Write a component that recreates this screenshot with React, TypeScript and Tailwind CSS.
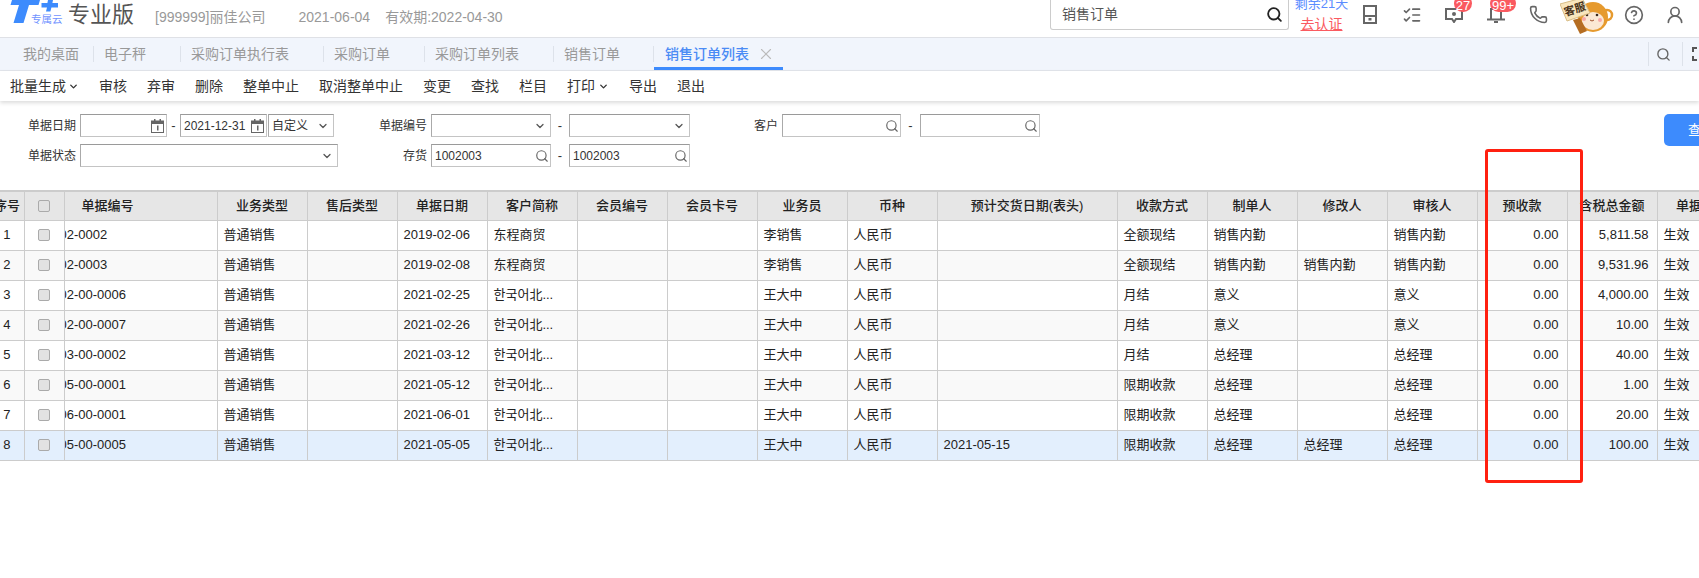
import type { ReactNode } from 'react';
import { ChevronDown, CircleHelp, ListChecks, Phone, Search, UserRound, X } from 'lucide-react';

type Row = {
  no: number;
  code: string;
  date: string;
  customer: string;
  clerk: string;
  delivery: string;
  payment: string;
  maker: string;
  editor: string;
  auditor: string;
  total: string;
};

const rows: Row[] = [
  { no: 1, code: '02-0002', date: '2019-02-06', customer: '东程商贸', clerk: '李销售', delivery: '', payment: '全额现结', maker: '销售内勤', editor: '', auditor: '销售内勤', total: '5,811.58' },
  { no: 2, code: '02-0003', date: '2019-02-08', customer: '东程商贸', clerk: '李销售', delivery: '', payment: '全额现结', maker: '销售内勤', editor: '销售内勤', auditor: '销售内勤', total: '9,531.96' },
  { no: 3, code: '02-00-0006', date: '2021-02-25', customer: '한국어北...', clerk: '王大中', delivery: '', payment: '月结', maker: '意义', editor: '', auditor: '意义', total: '4,000.00' },
  { no: 4, code: '02-00-0007', date: '2021-02-26', customer: '한국어北...', clerk: '王大中', delivery: '', payment: '月结', maker: '意义', editor: '', auditor: '意义', total: '10.00' },
  { no: 5, code: '03-00-0002', date: '2021-03-12', customer: '한국어北...', clerk: '王大中', delivery: '', payment: '月结', maker: '总经理', editor: '', auditor: '总经理', total: '40.00' },
  { no: 6, code: '05-00-0001', date: '2021-05-12', customer: '한국어北...', clerk: '王大中', delivery: '', payment: '限期收款', maker: '总经理', editor: '', auditor: '总经理', total: '1.00' },
  { no: 7, code: '06-00-0001', date: '2021-06-01', customer: '한국어北...', clerk: '王大中', delivery: '', payment: '限期收款', maker: '总经理', editor: '', auditor: '总经理', total: '20.00' },
  { no: 8, code: '05-00-0005', date: '2021-05-05', customer: '한국어北...', clerk: '王大中', delivery: '2021-05-15', payment: '限期收款', maker: '总经理', editor: '总经理', auditor: '总经理', total: '100.00' },
];

const toolbar = ['审核', '弃审', '删除', '整单中止', '取消整单中止', '变更', '查找', '栏目'];

function Logo() {
  return (
    <div className="relative ml-[10px] h-[37px] w-[54px] shrink-0 self-start">
      <svg width="54" height="24" viewBox="0 0 54 24" className="absolute left-0 top-0">
        <path d="M2 0H30L28.5 5H19L13.5 23H3.5L9 5H0.5Z" fill="#3d8bfd" />
        <path d="M38 0H43L42.4 3H48V7.5H41.4L40.4 11.5H36L37 7.5H31.5V3H37.4Z" fill="#3d8bfd" />
      </svg>
      <span className="absolute left-[21px] top-[15px] text-[10.5px] leading-[9px] whitespace-nowrap text-[#6f93ff]">专属云</span>
    </div>
  );
}

function Badge({ children, className }: { children: ReactNode; className: string }) {
  return (
    <span className={`absolute -top-[5px] flex h-[17px] items-center justify-center rounded-full bg-[#fa5a60] pt-[3px] text-[13px] leading-none text-white ${className}`}>
      {children}
    </span>
  );
}

function Monkey() {
  return (
    <svg width="54" height="37" viewBox="0 0 54 37" className="shrink-0">
      <circle cx="47" cy="15" r="5" fill="none" stroke="#e69a2e" strokeWidth="2.5" />
      <circle cx="33" cy="17" r="15" fill="#e69a2e" />
      <ellipse cx="33" cy="21" rx="11" ry="9" fill="#fbe8d4" />
      <circle cx="27" cy="15" r="1.3" fill="#3a2a20" />
      <circle cx="37" cy="15" r="1.3" fill="#3a2a20" />
      <circle cx="24" cy="19" r="2" fill="#f7a8a8" />
      <circle cx="40" cy="20" r="2" fill="#f7a8a8" />
      <path d="M30 20q2 2 4 0" fill="none" stroke="#a0522d" strokeWidth="1" />
      <path d="M13 20L20 18L27 31L20 34Z" fill="#b56d22" />
      <path d="M0 4L22 -2L30 13L7 21Z" fill="#f9e6bd" stroke="#d8bd87" />
      <text x="15" y="13" textAnchor="middle" fontSize="11" fontWeight="700" fill="#4a3520" transform="rotate(-18 15 10)">客服</text>
    </svg>
  );
}

function Header() {
  return (
    <header className="flex h-[38px] items-center border-b border-[#dfe1e6] bg-white pr-[3px]">
      <Logo />
      <span className="ml-[4px] mb-[8px] text-[22px] leading-none text-[#555] whitespace-nowrap">专业版</span>
      <span className="ml-[21px] mb-[2px] text-[14px] text-[#999] whitespace-nowrap">[999999]丽佳公司</span>
      <span className="ml-[33px] mb-[2px] text-[14px] text-[#999] whitespace-nowrap">2021-06-04</span>
      <span className="ml-[15px] mb-[2px] text-[14px] text-[#999] whitespace-nowrap">有效期:2022-04-30</span>
      <div className="ml-auto flex items-start self-start">
        <div className="flex h-[30px] w-[239px] items-center rounded-b-[3px] border border-t-0 border-[#ccc] pl-[11px] text-[14px] text-[#555]">
          销售订单
          <Search size={17} strokeWidth={2.6} className="ml-auto mr-[5px] text-[#222]" />
        </div>
        <div className="ml-[7px] flex w-[51px] flex-col items-center leading-[20px]">
          <span className="-mt-[6px] text-[13px] text-[#5b8cff] whitespace-nowrap">剩余21天</span>
          <span className="text-[14px] text-[#fa5a60] underline whitespace-nowrap">去认证</span>
        </div>
      </div>
      <div className="ml-[2px] flex h-[29px] items-center self-start text-[#666]">
        <div className="flex w-[42px] justify-center">
          <svg width="14" height="19" viewBox="0 0 14 19" fill="none" stroke="#666" strokeWidth="2">
            <rect x="1" y="1" width="12" height="17" />
            <path d="M1 11H13" />
            <rect x="5.5" y="13" width="3" height="2.5" fill="#666" stroke="none" />
          </svg>
        </div>
        <div className="flex w-[42px] justify-center">
          <ListChecks size={20} strokeWidth={2} />
        </div>
        <div className="relative flex h-full w-[42px] items-center justify-center">
          <svg width="18" height="16" viewBox="0 0 18 16" fill="none" stroke="#666" strokeWidth="2">
            <path d="M1 2H17V12H11L9 15L7 12H1Z" />
            <circle cx="9" cy="7" r="2" fill="#666" stroke="none" />
          </svg>
          <Badge className="left-[21px] w-[18px]">27</Badge>
        </div>
        <div className="relative flex h-full w-[41px] items-center justify-center">
          <svg width="20" height="16" viewBox="0 0 20 16" fill="none" stroke="#666" strokeWidth="2">
            <path d="M5 12V2H15V12" />
            <path d="M1 12.5H19" />
            <path d="M8 15H12" />
          </svg>
          <Badge className="left-[15px] w-[26px]">99+</Badge>
        </div>
        <div className="flex w-[44px] justify-center">
          <Phone size={19} strokeWidth={2} />
        </div>
      </div>
      <div className="self-start">
        <Monkey />
      </div>
      <div className="flex h-[29px] items-center self-start text-[#666]">
        <div className="flex w-[40px] justify-center">
          <CircleHelp size={20} strokeWidth={2} />
        </div>
        <div className="flex w-[42px] justify-center">
          <UserRound size={20} strokeWidth={2} />
        </div>
      </div>
    </header>
  );
}

function TabSep({ className = '' }: { className?: string }) {
  return <span className={`h-[16px] w-px shrink-0 bg-[#dde2ea] ${className}`} />;
}

function Tabs() {
  return (
    <nav className="flex h-[33px] items-center overflow-hidden border-b border-[#e3e6ec] bg-[#f1f5fc] text-[14px] whitespace-nowrap text-[#999]">
      <span className="ml-[23px]">我的桌面</span>
      <TabSep className="ml-[14px]" />
      <span className="ml-[10px]">电子秤</span>
      <TabSep className="ml-[34px]" />
      <span className="ml-[10px]">采购订单执行表</span>
      <TabSep className="ml-[34px]" />
      <span className="ml-[10px]">采购订单</span>
      <TabSep className="ml-[34px]" />
      <span className="ml-[10px]">采购订单列表</span>
      <TabSep className="ml-[34px]" />
      <span className="ml-[10px]">销售订单</span>
      <TabSep className="ml-[33px]" />
      <div className="relative flex h-full w-[129px] items-center pl-[11px] font-medium text-[#4a8bf5]">
        销售订单列表
        <X size={18} strokeWidth={1.5} className="ml-[8px] text-[#bbb]" />
        <span className="absolute bottom-0 left-0 h-[3px] w-full bg-[#3d8bfd]" />
      </div>
      <div className="ml-auto -mr-[7px] flex h-full shrink-0 items-center">
        <TabSep className="h-[24px]" />
        <Search size={15} strokeWidth={2.2} className="ml-[7px] mr-[11px] text-[#666]" />
        <TabSep className="h-[24px]" />
        <svg width="14" height="14" viewBox="0 0 14 14" fill="none" stroke="#555" strokeWidth="2" className="ml-[9px]">
          <path d="M1 5V1H5M9 1H13V5M13 9V13H9M5 13H1V9" />
        </svg>
      </div>
    </nav>
  );
}

function Toolbar() {
  return (
    <div className="relative flex h-[30px] items-center gap-[20px] bg-white pl-[10px] text-[14px] whitespace-nowrap text-[#333] shadow-[0_2px_4px_rgba(0,0,0,0.14)]">
      <span className="flex w-[69px] items-center">
        批量生成
        <ChevronDown size={11} strokeWidth={3} className="ml-[2px]" />
      </span>
      {toolbar.map((item) => (
        <span key={item}>{item}</span>
      ))}
      <span className="flex w-[42px] items-center">
        打印
        <ChevronDown size={11} strokeWidth={3} className="ml-[3px]" />
      </span>
      <span>导出</span>
      <span>退出</span>
    </div>
  );
}

function FieldLabel({ children, className }: { children: ReactNode; className: string }) {
  return <span className={`mr-[4px] text-right text-[12px] whitespace-nowrap text-[#333] ${className}`}>{children}</span>;
}

function Dash({ width }: { width: string }) {
  return <span className={`text-center text-[13px] text-[#333] ${width}`}>-</span>;
}

function CalendarIcon() {
  return (
    <svg width="13" height="14" viewBox="0 0 13 14" className="ml-auto mr-[2px] shrink-0">
      <rect x="0.5" y="2" width="12" height="11.5" fill="#fff" stroke="#666" />
      <rect x="0.5" y="2" width="12" height="3" fill="#666" />
      <rect x="3" y="0" width="1.5" height="3" fill="#666" />
      <rect x="8.5" y="0" width="1.5" height="3" fill="#666" />
      <rect x="6" y="6.5" width="1.5" height="5" fill="#666" />
    </svg>
  );
}

function Box({ width, value, kind }: { width: string; value?: string; kind: 'date' | 'select' | 'search' }) {
  return (
    <div className={`flex h-[23px] items-center border border-[#c4c4c4] border-t-[#9a9a9a] border-l-[#aaa] pl-[3px] text-[12px] whitespace-nowrap text-[#333] ${width}`}>
      {value}
      {kind === 'date' && <CalendarIcon />}
      {kind === 'select' && <ChevronDown size={12} strokeWidth={2.5} className="ml-auto mr-[4px] text-[#555]" />}
      {kind === 'search' && <Search size={14} strokeWidth={2} className="ml-auto mr-[1px] text-[#666]" />}
    </div>
  );
}

function Filters() {
  return (
    <section className="flex h-[89px] pt-[13px]">
      <div className="flex flex-col gap-[7px] pl-[28px]">
        <div className="flex items-center">
          <FieldLabel className="w-[48px]">单据日期</FieldLabel>
          <Box width="w-[87px]" kind="date" />
          <Dash width="w-[13px]" />
          <Box width="w-[87px]" value="2021-12-31" kind="date" />
          <Box width="ml-[1px] w-[66px]" value="自定义" kind="select" />
          <FieldLabel className="ml-[45px] w-[48px]">单据编号</FieldLabel>
          <Box width="w-[120px]" kind="select" />
          <Dash width="w-[18px]" />
          <Box width="w-[121px]" kind="select" />
          <FieldLabel className="ml-[64px] w-[24px]">客户</FieldLabel>
          <Box width="w-[119px]" kind="search" />
          <Dash width="w-[19px]" />
          <Box width="w-[120px]" kind="search" />
        </div>
        <div className="flex items-center">
          <FieldLabel className="w-[48px]">单据状态</FieldLabel>
          <Box width="w-[258px]" kind="select" />
          <FieldLabel className="ml-[65px] w-[24px]">存货</FieldLabel>
          <Box width="w-[120px]" value="1002003" kind="search" />
          <Dash width="w-[18px]" />
          <Box width="w-[121px]" value="1002003" kind="search" />
        </div>
      </div>
      <button className="ml-[624px] h-[32px] w-[80px] shrink-0 rounded-[5px] bg-[#3d8bfd] pl-[24px] text-left text-[13px] text-white">
        查询
      </button>
    </section>
  );
}

function Check() {
  return <span className="mx-auto block h-[12px] w-[12px] rounded-[2px] border border-[#aaa] bg-[#e2e2e2]" />;
}

const headCell = 'overflow-hidden border-r border-b border-[#ccc] text-center font-medium whitespace-nowrap';
const bodyCell = 'overflow-hidden border-r border-b border-[#ccc] pl-[6px] whitespace-nowrap';

function Orders() {
  return (
    <div className="-ml-[10px]">
      <table className="w-[1810px] table-fixed border-collapse text-[13px] text-[#222]">
        <colgroup>
          <col className="w-[34px]" />
          <col className="w-[40px]" />
          <col className="w-[153px]" />
          {Array.from({ length: 8 }, (_, i) => (
            <col key={i} className="w-[90px]" />
          ))}
          <col className="w-[180px]" />
          {Array.from({ length: 8 }, (_, i) => (
            <col key={i} className="w-[90px]" />
          ))}
        </colgroup>
        <thead>
          <tr className="h-[29px] border-t-2 border-[#ccc] bg-[#e6e6e6]">
            <th className={`${headCell} pl-[4px] text-left`}>序号</th>
            <th className={headCell}><Check /></th>
            <th className={`${headCell} pr-[66px]`}>单据编号</th>
            <th className={headCell}>业务类型</th>
            <th className={headCell}>售后类型</th>
            <th className={headCell}>单据日期</th>
            <th className={headCell}>客户简称</th>
            <th className={headCell}>会员编号</th>
            <th className={headCell}>会员卡号</th>
            <th className={headCell}>业务员</th>
            <th className={headCell}>币种</th>
            <th className={headCell}>预计交货日期(表头)</th>
            <th className={headCell}>收款方式</th>
            <th className={headCell}>制单人</th>
            <th className={headCell}>修改人</th>
            <th className={headCell}>审核人</th>
            <th className={headCell}>预收款</th>
            <th className={headCell}>含税总金额</th>
            <th className={headCell}>单据状态</th>
            <th className={headCell} />
          </tr>
        </thead>
        <tbody>
          {rows.map((row) => (
            <tr key={row.no} className={`h-[30px] ${row.no === 8 ? 'bg-[#e3effd]' : row.no % 2 === 0 ? 'bg-[#f9f9f9]' : 'bg-white'}`}>
              <td className="border-r border-b border-[#ccc] text-center">{row.no}</td>
              <td className="border-r border-b border-[#ccc]"><Check /></td>
              <td className="overflow-hidden border-r border-b border-[#ccc] whitespace-nowrap">
                <span className="-ml-[5px] block">{row.code}</span>
              </td>
              <td className={bodyCell}>普通销售</td>
              <td className={bodyCell} />
              <td className={bodyCell}>{row.date}</td>
              <td className={bodyCell}>{row.customer}</td>
              <td className={bodyCell} />
              <td className={bodyCell} />
              <td className={bodyCell}>{row.clerk}</td>
              <td className={bodyCell}>人民币</td>
              <td className={bodyCell}>{row.delivery}</td>
              <td className={bodyCell}>{row.payment}</td>
              <td className={bodyCell}>{row.maker}</td>
              <td className={bodyCell}>{row.editor}</td>
              <td className={bodyCell}>{row.auditor}</td>
              <td className={`${bodyCell} pr-[8px] text-right`}>0.00</td>
              <td className={`${bodyCell} pr-[8px] text-right`}>{row.total}</td>
              <td className={bodyCell}>生效</td>
              <td className={bodyCell} />
            </tr>
          ))}
        </tbody>
      </table>
    </div>
  );
}

export default function App() {
  return (
    <div className="relative h-[578px] w-[1699px] overflow-hidden bg-white font-['Liberation_Sans','Noto_Sans_CJK_SC',sans-serif]">
      <Header />
      <Tabs />
      <Toolbar />
      <Filters />
      <Orders />
      {/* red highlight drawn over the 预收款 column */}
      <div className="absolute top-[149px] left-[1485px] h-[334px] w-[98px] rounded-[3px] border-[3px] border-[#ff2010]" />
    </div>
  );
}
